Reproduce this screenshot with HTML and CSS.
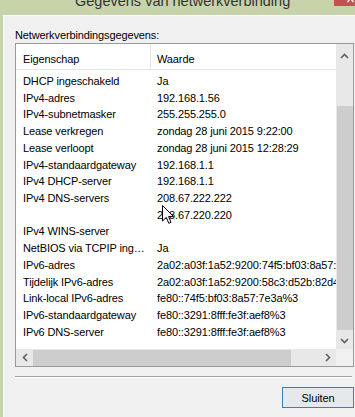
FILE: index.html
```html
<!DOCTYPE html>
<html lang="nl">
<head>
  <meta charset="UTF-8">
  <meta name="viewport" content="width=device-width, initial-scale=1.0">
  <title>Gegevens van netwerkverbinding</title>
  <link rel="stylesheet" href="styles.css">
</head>
<body>
  <div class="window">
    <div class="titlebar">
      <span class="title">Gegevens van netwerkverbinding</span>
      <span class="close">
        <svg width="21" height="6" viewBox="0 0 21 6"><path d="M16.5 -1.5 L13.5 2 M16.5 -1.5 L19.5 2" stroke="#fff" stroke-width="1.4" fill="none"/></svg>
      </span>
    </div>

    <div class="panel">
      <div class="caption">Netwerkverbindingsgegevens:</div>

      <div class="listbox">
        <div class="list-head">
          <div class="c1">Eigenschap</div>
          <div class="c2">Waarde</div>
        </div>

        <div class="list-rows">
          <div class="row"><span class="c1">DHCP ingeschakeld</span><span class="c2">Ja</span></div>
          <div class="row"><span class="c1">IPv4-adres</span><span class="c2">192.168.1.56</span></div>
          <div class="row"><span class="c1">IPv4-subnetmasker</span><span class="c2">255.255.255.0</span></div>
          <div class="row"><span class="c1">Lease verkregen</span><span class="c2">zondag 28 juni 2015 9:22:00</span></div>
          <div class="row"><span class="c1">Lease verloopt</span><span class="c2">zondag 28 juni 2015 12:28:29</span></div>
          <div class="row"><span class="c1">IPv4-standaardgateway</span><span class="c2">192.168.1.1</span></div>
          <div class="row"><span class="c1">IPv4 DHCP-server</span><span class="c2">192.168.1.1</span></div>
          <div class="row"><span class="c1">IPv4 DNS-servers</span><span class="c2">208.67.222.222</span></div>
          <div class="row"><span class="c1"></span><span class="c2">208.67.220.220</span></div>
          <div class="row"><span class="c1">IPv4 WINS-server</span><span class="c2"></span></div>
          <div class="row"><span class="c1">NetBIOS via TCPIP ingeschakeld</span><span class="c2">Ja</span></div>
          <div class="row"><span class="c1">IPv6-adres</span><span class="c2">2a02:a03f:1a52:9200:74f5:bf03:8a57:7e3a</span></div>
          <div class="row"><span class="c1">Tijdelijk IPv6-adres</span><span class="c2">2a02:a03f:1a52:9200:58c3:d52b:82d4:1c1e</span></div>
          <div class="row"><span class="c1">Link-local IPv6-adres</span><span class="c2">fe80::74f5:bf03:8a57:7e3a%3</span></div>
          <div class="row"><span class="c1">IPv6-standaardgateway</span><span class="c2">fe80::3291:8fff:fe3f:aef8%3</span></div>
          <div class="row"><span class="c1">IPv6 DNS-server</span><span class="c2">fe80::3291:8fff:fe3f:aef8%3</span></div>
        </div>

        <div class="vscroll">
          <div class="sb-btn"><svg width="9" height="6" viewBox="0 0 9 6"><path d="M1 5 L4.5 1.5 L8 5" stroke="#606060" stroke-width="1.6" fill="none"/></svg></div>
          <div class="v-track"><div class="v-thumb"></div></div>
          <div class="sb-btn"><svg width="9" height="6" viewBox="0 0 9 6"><path d="M1 1 L4.5 4.5 L8 1" stroke="#606060" stroke-width="1.6" fill="none"/></svg></div>
        </div>

        <div class="hscroll">
          <div class="sb-btn"><svg width="6" height="9" viewBox="0 0 6 9"><path d="M5 1 L1.5 4.5 L5 8" stroke="#606060" stroke-width="1.6" fill="none"/></svg></div>
          <div class="h-track"><div class="h-thumb"></div></div>
          <div class="sb-btn"><svg width="6" height="9" viewBox="0 0 6 9"><path d="M1 1 L4.5 4.5 L1 8" stroke="#606060" stroke-width="1.6" fill="none"/></svg></div>
        </div>

        <div class="corner"></div>
      </div>

      <div class="separator"></div>

      <div class="actions">
        <button class="btn">Sluiten</button>
      </div>
    </div>
  </div>

  <!-- mouse pointer lying over the list -->
  <svg class="cursor" width="13" height="20" viewBox="0 0 13 20">
    <path d="M0.5 0.5 L0.5 16 L4.3 12.4 L6.8 18.3 L9 17.3 L6.6 11.6 L11.5 11.6 Z" fill="#fff" stroke="#000" stroke-width="1" stroke-linejoin="miter"/>
  </svg>
</body>
</html>
```

FILE: styles.css
```css
body {
  margin: 0;
  padding: 0;
  width: 355px;
  height: 417px;
  overflow: hidden;
  background-color: #c6d3ab;
  font-family: "Liberation Sans", Arial, sans-serif;
  font-size: 11px;
  letter-spacing: -0.12px;
  color: #000;
  position: relative;
}

.window {
  display: flex;
  flex-direction: column;
  height: 417px;
}

.titlebar {
  height: 15px;
  display: flex;
  align-items: flex-start;
  overflow: hidden;
  flex-shrink: 0;
}

.title {
  display: block;
  flex: 1;
  padding-left: 75px;
  margin-top: -6px;
  font-size: 14.5px;
  line-height: 15px;
  letter-spacing: 0;
  color: #333;
  white-space: nowrap;
}

.close {
  display: block;
  width: 21px;
  height: 6px;
  background-color: #c75050;
}

.close svg {
  display: block;
}

.panel {
  flex: 1;
  margin-left: 3px;
  padding: 12px 0 0 11px;
  background-color: #f0f0f0;
  border-top: 1px solid #f9f9f9;
  border-left: 1px solid #f9f9f9;
}

.caption {
  line-height: 14px;
  height: 14px;
  white-space: nowrap;
}

.listbox {
  margin-top: 1px;
  width: 339px;
  box-sizing: border-box;
  border: 1px solid #9a9a9a;
  display: grid;
  grid-template-columns: 320px 17px;
  grid-template-rows: 26px 279px 17px;
  background-color: #fff;
}

.list-head {
  grid-column: 1;
  grid-row: 1;
  display: flex;
  border-bottom: 1px solid #e5e5e5;
  box-sizing: border-box;
}

.list-head .c1,
.list-head .c2 {
  padding-top: 7px;
  line-height: 16px;
}

.c1 {
  width: 135px;
  flex-shrink: 0;
  box-sizing: border-box;
  padding: 0 1px 0 7px;
  white-space: nowrap;
  overflow: hidden;
  text-overflow: ellipsis;
}

.list-head .c1 {
  border-right: 1px solid #e5e5e5;
}

.c2 {
  flex: 1;
  padding-left: 6px;
  white-space: nowrap;
  overflow: hidden;
}

.list-rows {
  grid-column: 1;
  grid-row: 2;
  padding-top: 3px;
  overflow: hidden;
}

.row {
  display: flex;
  height: 16.73px;
  line-height: 16.73px;
}

.vscroll {
  grid-column: 2;
  grid-row: 1 / 3;
  display: flex;
  flex-direction: column;
  background-color: #e8e8e8;
}

.sb-btn {
  width: 17px;
  height: 17px;
  flex-shrink: 0;
  display: flex;
  align-items: center;
  justify-content: center;
}

.vscroll .sb-btn:first-child {
  height: 22px;
  padding-top: 2px;
  box-sizing: border-box;
}

.v-track {
  flex: 1;
  padding-top: 40px;
}

.v-thumb {
  margin-left: 1px;
  width: 16px;
  height: 224px;
  background-color: #cdcdcd;
}

.hscroll {
  grid-column: 1;
  grid-row: 3;
  display: flex;
  background-color: #e8e8e8;
}

.h-track {
  flex: 1;
}

.h-thumb {
  width: 258px;
  height: 16px;
  margin-top: 1px;
  background-color: #cdcdcd;
}

.corner {
  grid-column: 2;
  grid-row: 3;
  background-color: #f0f0f0;
}

.separator {
  margin-top: 9px;
  width: 337px;
  border-top: 1px solid #a0a0a0;
  border-bottom: 1px solid #fff;
}

.actions {
  width: 339px;
  display: flex;
  justify-content: flex-end;
  margin-top: 9px;
}

.btn {
  width: 72px;
  height: 21px;
  padding: 0;
  border: 1px solid #3c7fb1;
  background-color: #e5e8ec;
  font-family: "Liberation Sans", Arial, sans-serif;
  font-size: 11px;
  letter-spacing: -0.12px;
  color: #000;
}

.cursor {
  position: absolute;
  left: 162px;
  top: 205px;
}
```
